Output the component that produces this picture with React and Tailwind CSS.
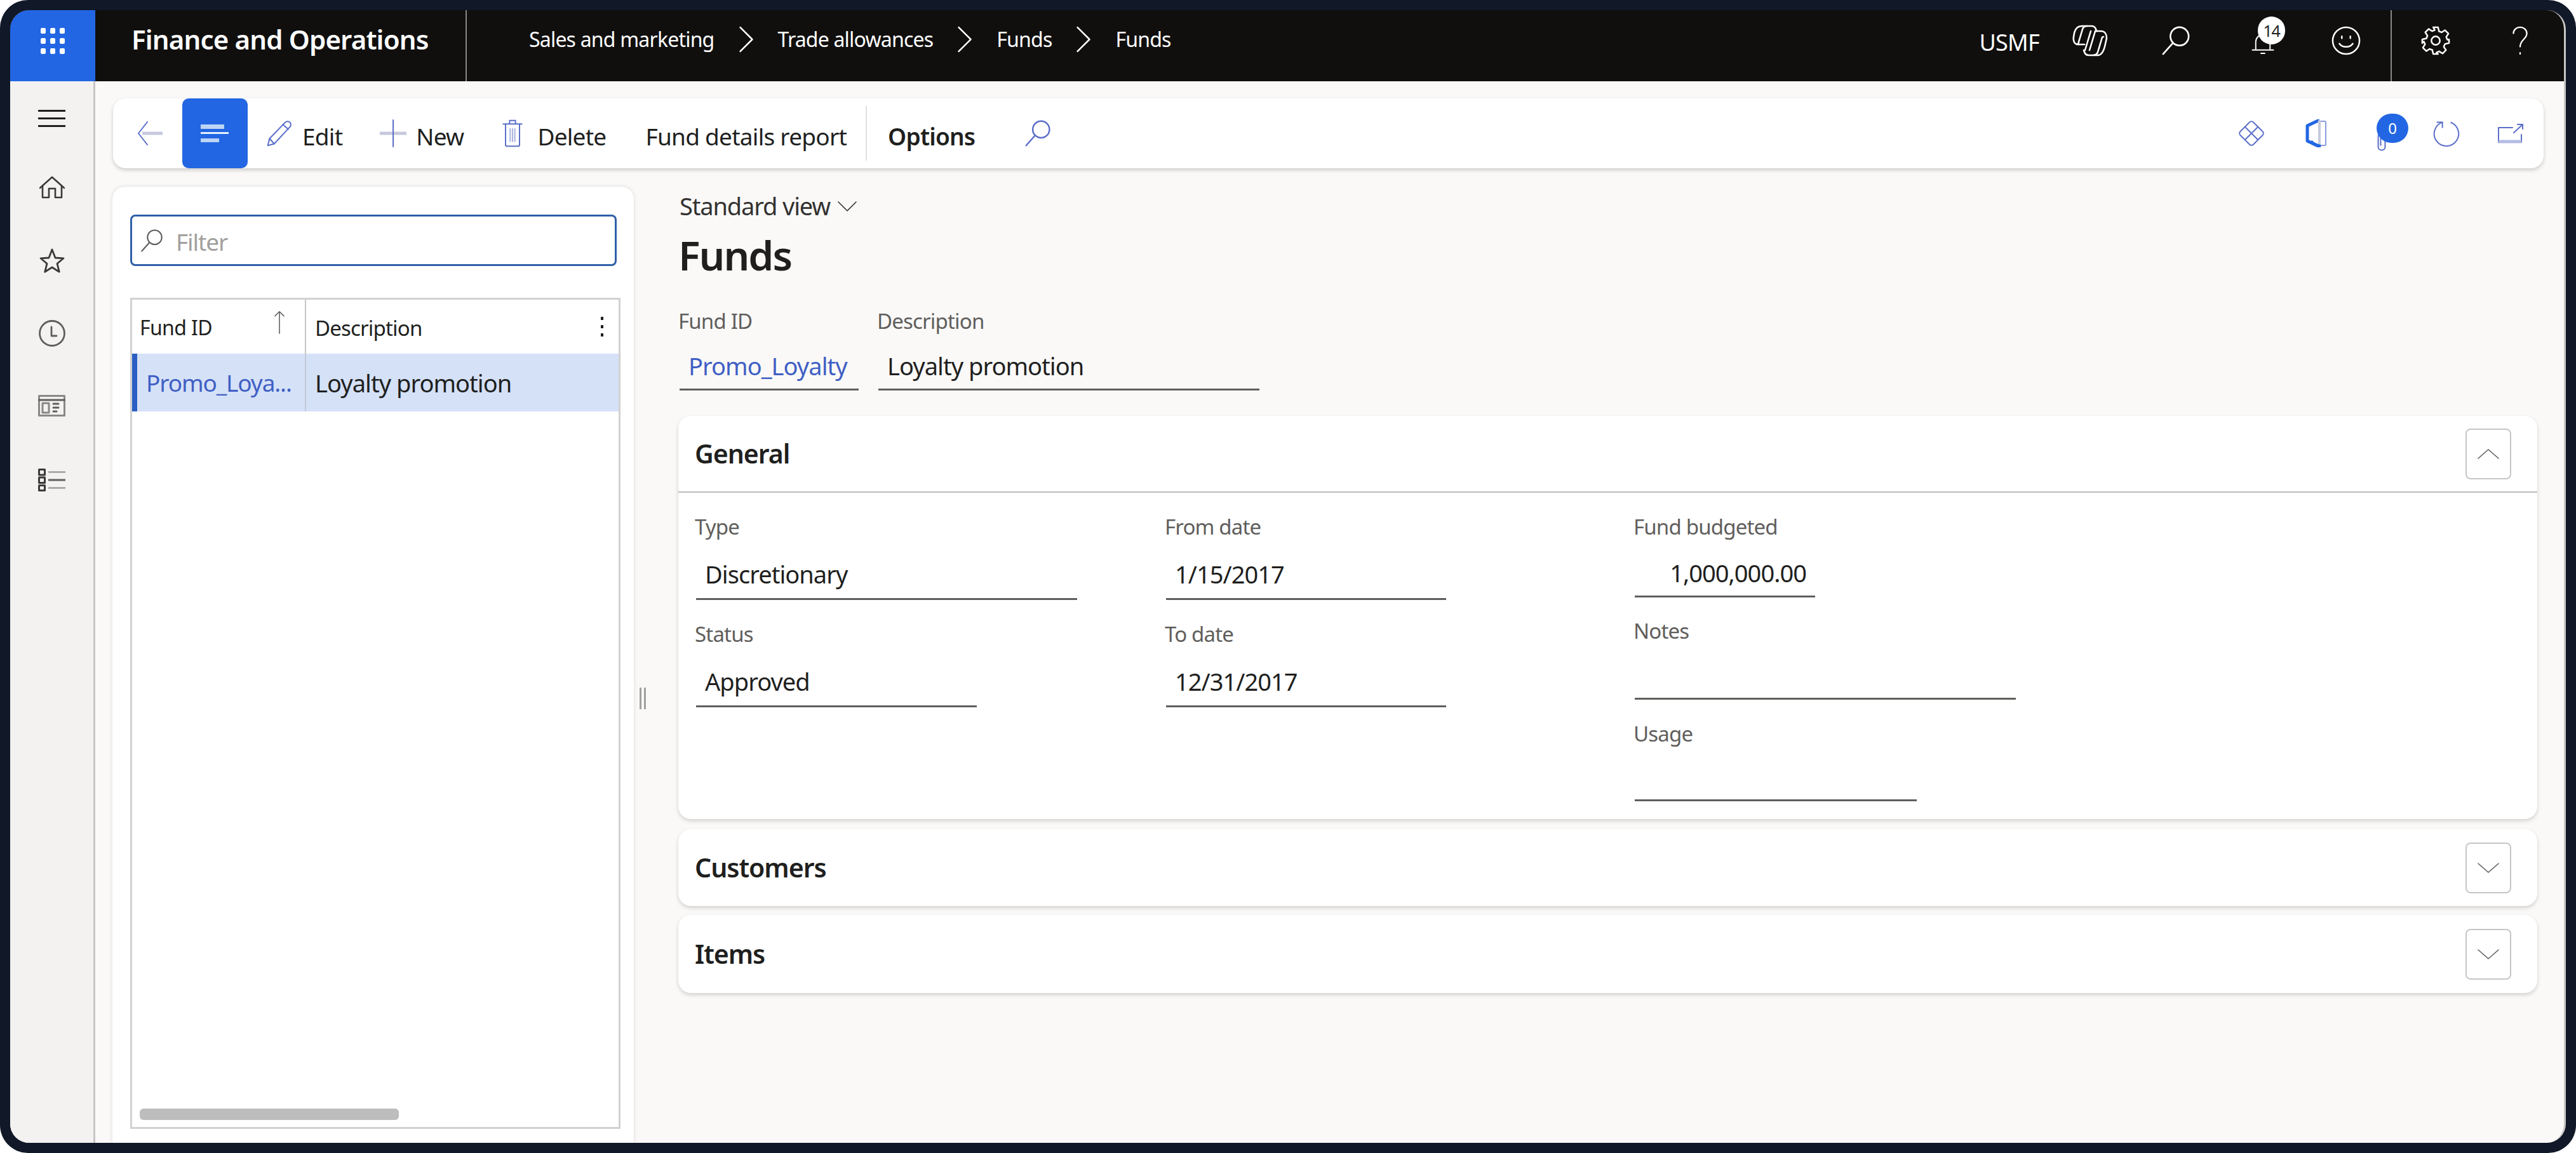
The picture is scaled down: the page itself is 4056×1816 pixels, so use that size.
import React from "react";

const Ico = ({ className = "", vb = "0 0 24 24", sw = 1.1, children }) => (
  <svg viewBox={vb} className={className} fill="none" stroke="currentColor" strokeWidth={sw} strokeLinecap="round" strokeLinejoin="round">
    {children}
  </svg>
);

const Search = ({ className }) => (
  <Ico className={className} sw={1.400}>
    <circle cx="15" cy="8.500" r="7.500" />
    <path d="M9.500 14L1.500 23" />
  </Ico>
);

const Chevron = () => (
  <Ico className="w-[26px] h-[42px] text-white mx-[37px]" vb="0 0 12 20" sw={1.200}>
    <path d="M1.500 1l9 9-9 9" />
  </Ico>
);

const Crumb = ({ children }) => (
  <span className="text-[32px] text-white leading-none tracking-[-0.025em]">{children}</span>
);

const TopBar = () => (
  <div className="h-[112px] bg-[#100f0e] flex items-center shrink-0">
    <div className="w-[134px] h-full bg-[#2266e3] flex items-center justify-center">
      <div className="grid grid-cols-3 gap-x-[7px] gap-y-[7px] mb-[16px]">
        {[0, 1, 2, 3, 4, 5, 6, 7, 8].map((i) => (
          <div key={i} className="w-[8px] h-[9px] rounded-[2px] bg-white" />
        ))}
      </div>
    </div>
    <div className="w-[585px] h-full border-r-2 border-[#8a8886] flex items-center pl-[57px]">
      <span className="text-[42px] font-semibold text-white tracking-[-0.02em] leading-none mb-[20px]">Finance and Operations</span>
    </div>
    <nav className="flex items-center ml-[98px] mb-[20px]">
      <Crumb>Sales and marketing</Crumb>
      <Chevron />
      <Crumb>Trade allowances</Crumb>
      <Chevron />
      <Crumb>Funds</Crumb>
      <Chevron />
      <Crumb>Funds</Crumb>
    </nav>
    <div className="ml-auto flex items-center h-full text-white">
      <span className="text-[36px] leading-none tracking-[-0.02em] mr-[52px] mb-[10px]">USMF</span>
      <Ico className="w-[56px] h-[52px] mr-[84px] mb-[16px]" vb="0 0 56 52" sw={2.600}>
        <path d="M16 3h14c4 0 6 2 7 5l1 3" />
        <path d="M23 3c-4 0-6 2-7 5L10 28c-1 3 0 4-3 4" />
        <path d="M16 3C8 3 5 7 3 14l-1 6c-1 6 1 12 7 12h10" />
        <path d="M40 49H26c-4 0-6-2-7-5l-1-3" />
        <path d="M33 49c4 0 6-2 7-5l6-20c1-3 0-4 3-4" />
        <path d="M36 11h9c6 0 9 5 9 11l-2 9c-2 10-5 18-12 18" />
        <path d="M29 11l-9 30M36 11l-9 30" />
      </Ico>
      <Search className="w-[46px] h-[46px] mr-[96px] mb-[16px]" />
      <div className="relative w-[46px] h-[46px] mr-[80px] mb-[16px]">
        <Ico className="w-[36px] h-[40px] absolute left-[0px] top-[8px]" sw={1.300}>
          <path d="M4.500 18V10a7.500 7.500 0 0 1 15 0v8" />
          <path d="M1 18.500h22M10 22h4" />
        </Ico>
        <div className="absolute left-[10px] top-[-15px] w-[43px] h-[44px] rounded-full bg-white flex items-center justify-center text-[#201f1e] text-[25px] leading-none tracking-[-0.05em]">
          14
        </div>
      </div>
      <Ico className="w-[46px] h-[46px] mr-[47px] mb-[16px]" sw={1.300}>
        <circle cx="12" cy="12" r="11" />
        <path d="M8.500 8.500v1.500M15.500 8.500v1.500M6.500 14.500c2.500 3.500 8.500 3.500 11 0" />
      </Ico>
      <div className="w-[2px] h-full bg-[#8a8886] mr-[45px]" />
      <Ico className="w-[48px] h-[46px] mr-[95px] mb-[16px]" sw={1.300}>
        <circle cx="12" cy="12" r="3.500" />
        <path d="M10 1h4l.7 3.300 2.200.9 2.800-1.800 2.800 2.800-1.800 2.800.9 2.200L23 11v3l-3.400.8-.9 2.200 1.800 2.800-2.800 2.800-2.800-1.800-2.200.9L14 23h-4l-.7-3.300-2.200-.9-2.800 1.800-2.800-2.800 1.800-2.800-.9-2.200L1 14v-3l3.400-.8.9-2.200-1.800-2.800 2.800-2.800 2.800 1.800 2.200-.9z" />
      </Ico>
      <Ico className="w-[28px] h-[46px] mr-[55px] mb-[16px]" vb="0 0 14 24" sw={1.200}>
        <path d="M1.500 6c0-3 2.500-5 5.500-5s5.500 2 5.500 5c0 5-5.500 5-5.500 11M7 22v1" />
      </Ico>
    </div>
  </div>
);

const ToolText = ({ children, className = "" }) => (
  <span className={`text-[37px] leading-none text-[#201f1e] tracking-[-0.02em] mt-[8px] ${className}`}>{children}</span>
);

const Toolbar = () => (
  <div className="mt-[27px] ml-[28px] mr-[32px] h-[110px] bg-white rounded-[20px] shadow-[0_3px_6px_rgba(0,0,0,0.18)] flex items-center shrink-0">
    <Ico className="w-[42px] h-[38px] ml-[38px] text-[#5b6fc9]" vb="0 0 42 38" sw={2}>
      <path d="M8 19h32" stroke="#c6c9dc" strokeWidth={5} strokeLinecap="butt" />
      <path d="M16 1L2 19l14 18" />
    </Ico>
    <div className="w-[103px] h-full bg-[#2266e3] rounded-[10px] ml-[29px] flex flex-col justify-center pl-[29px]">
      <div className="w-[37px] h-[7px] bg-[#bcd4f7]" />
      <div className="w-[44px] h-[3px] bg-[#e6f0ff] mt-[5px]" />
      <div className="w-[29px] h-[6px] bg-[#bcd4f7] mt-[7px]" />
    </div>
    <Ico className="w-[44px] h-[44px] ml-[28px] text-[#5b6fc9]" sw={1.100}>
      <path d="M2 22.500l1.500-6L17 2.500c1-1 3-1 4 0s1 3 0 4L7.500 21z" />
      <path d="M3.500 16.500l4 4.500M15 4.500l4.500 4" />
    </Ico>
    <ToolText className="ml-[14px]">Edit</ToolText>
    <Ico className="w-[44px] h-[44px] ml-[58px] text-[#5b6fc9]" vb="0 0 44 44" sw={2}>
      <path d="M1 22h42" stroke="#c6c9dc" strokeWidth={5} strokeLinecap="butt" />
      <path d="M22 1v42" />
    </Ico>
    <ToolText className="ml-[14px]">New</ToolText>
    <Ico className="w-[34px] h-[44px] ml-[60px] text-[#5b6fc9]" vb="0 0 18 24" sw={1.100}>
      <path d="M1 4h16M3 4v18c0 .5.500 1 1 1h10c.5 0 1-.5 1-1V4M6.500 4V1h5v3" />
      <path d="M7 8v11M11 8v11M9 8v11" stroke="#aab3e0" />
    </Ico>
    <ToolText className="ml-[22px]">Delete</ToolText>
    <ToolText className="ml-[62px]">Fund details report</ToolText>
    <div className="w-[2px] h-[86px] bg-[#e1dfdd] ml-[30px]" />
    <ToolText className="ml-[33px] font-semibold">Options</ToolText>
    <Search className="w-[42px] h-[42px] ml-[78px] text-[#5b6fc9]" />
    <div className="ml-auto flex items-center text-[#5b6fc9]">
      <Ico className="w-[42px] h-[42px] mr-[64px]" vb="0 0 42 42" sw={2}>
        <path d="M18 3.500c1.700-1.700 4.300-1.700 6 0L38.500 18c1.700 1.700 1.700 4.300 0 6L24 38.500c-1.700 1.700-4.300 1.700-6 0L3.500 24c-1.700-1.700-1.700-4.300 0-6z" />
        <path d="M11 11l20 20M31 11L11 31" />
      </Ico>
      <Ico className="w-[34px] h-[44px] mr-[78px]" vb="0 0 34 44" sw={2}>
        <path d="M20 2L3 10v24l17 8" stroke="#2266e3" strokeWidth={5} />
        <path d="M20 3h10c1 0 2 1 2 2v34c0 1-1 2-2 2H20" stroke="#8d9be0" />
        <path d="M22 3v38" stroke="#c6c9dc" strokeWidth={4} />
        <path d="M10 36c3 3 8 5 12 6" stroke="#2266e3" strokeWidth={5} />
      </Ico>
      <div className="relative w-[16px] h-[34px] mr-[72px] mt-[22px]">
        <Ico className="w-[16px] h-[34px]" vb="0 0 10 22" sw={1.300}>
          <path d="M1.500 6v12c0 4 7 4 7 0V4C8.500 0 4 0 4 4v12" />
        </Ico>
        <div className="absolute left-[0px] top-[-25px] w-[50px] h-[46px] rounded-full bg-[#2266e3] flex items-center justify-center text-white text-[24px] leading-none">
          0
        </div>
      </div>
      <Ico className="w-[44px] h-[44px] mr-[58px]" sw={1.100}>
        <path d="M8.500 2.500a10.500 10.500 0 1 0 7.500.2" />
        <path d="M8.500 7V2.500H4" />
      </Ico>
      <Ico className="w-[42px] h-[32px] mr-[31px]" vb="0 0 42 32" sw={2}>
        <path d="M2 7h22M2 7v23M38 18v12" />
        <path d="M2 29h36" stroke="#b4bbe4" strokeWidth={5} strokeLinecap="butt" />
        <path d="M26 15L40 2M32 2h8v7" />
      </Ico>
    </div>
  </div>
);

const Sidebar = () => (
  <div className="w-[134px] shrink-0 bg-[#f3f2f1] border-r-[3px] border-[#c8c6c4] flex flex-col items-center text-[#3b3a39]">
    <div className="mt-[45px] flex flex-col gap-[9px]">
      <div className="w-[43px] h-[3px] bg-[#201f1e]" />
      <div className="w-[43px] h-[3px] bg-[#201f1e]" />
      <div className="w-[43px] h-[3px] bg-[#201f1e]" />
    </div>
    <Ico className="w-[40px] h-[36px] mt-[77px]" vb="0 0 40 36" sw={2.600}>
      <path d="M1 19L20 2l19 17" />
      <path d="M5 16v18h10V20h10v14h10V16" />
    </Ico>
    <Ico className="w-[40px] h-[40px] mt-[78px]" vb="0 0 40 40" sw={2.800}>
      <path d="M20 2l5 13 13 .8-10 8.400 3.300 13-11.300-7.200-11.300 7.200 3.300-13-10-8.400L15 15z" />
    </Ico>
    <Ico className="w-[42px] h-[42px] mt-[73px] text-[#605e5c]" vb="0 0 42 42" sw={2.800}>
      <circle cx="21" cy="21" r="19.500" />
      <path d="M20 11v14h8" />
    </Ico>
    <Ico className="w-[43px] h-[34px] mt-[76px] text-[#8a8886]" vb="0 0 43 34" sw={3}>
      <rect x="1.500" y="1.500" width="40" height="31" />
      <path d="M1.500 8h40" stroke="#605e5c" />
      <rect x="7" y="13" width="10" height="15" />
      <path d="M24 14h8M24 20h8M24 26h5" stroke="#605e5c" />
    </Ico>
    <Ico className="w-[43px] h-[36px] mt-[82px]" vb="0 0 43 36" sw={3}>
      <rect x="1.500" y="1.500" width="9" height="8.500" />
      <rect x="1.500" y="14" width="9" height="8.500" />
      <rect x="1.500" y="26.500" width="9" height="8" />
      <path d="M16 5.500h27M16 30.500h27" stroke="#a19f9d" strokeWidth={2.500} strokeLinecap="butt" />
      <path d="M16 18h27" stroke="#605e5c" strokeWidth={3} strokeLinecap="butt" />
    </Ico>
  </div>
);

const LeftPane = () => (
  <div className="w-[821px] shrink-0 bg-white rounded-t-[20px] shadow-[0_0_6px_rgba(0,0,0,0.13)] pt-[44px] pl-[28px]">
    <div className="w-[766px] h-[81px] border-[3px] border-[#2f5fa8] rounded-[8px] flex items-center pl-[13px]">
      <Search className="w-[36px] h-[36px] text-[#605e5c]" />
      <span className="ml-[20px] mt-[4px] text-[37px] leading-none text-[#a19f9d] tracking-[-0.03em]">Filter</span>
    </div>
    <div className="relative w-[772px] h-[1309px] mt-[50px] border-[3px] border-[#d1d1d1]">
      <div className="flex h-[85px] items-center">
        <div className="w-[274px] h-full border-r-2 border-[#c8c6c4] flex items-center pl-[12px]">
          <span className="text-[32px] leading-none text-[#201f1e] tracking-[-0.02em] mt-[3px]">Fund ID</span>
          <Ico className="w-[18px] h-[38px] ml-[97px] mb-[14px] text-[#605e5c]" vb="0 0 10 22" sw={0.900}>
            <path d="M5 21V1M1 5l4-4 4 4" />
          </Ico>
        </div>
        <span className="ml-[14px] mt-[3px] text-[33px] leading-none text-[#201f1e] tracking-[-0.025em]">Description</span>
        <div className="ml-auto mr-[24px] flex flex-col gap-[8px]">
          <div className="w-[4px] h-[5px] bg-[#201f1e]" />
          <div className="w-[4px] h-[5px] bg-[#201f1e]" />
          <div className="w-[4px] h-[5px] bg-[#201f1e]" />
        </div>
      </div>
      <div className="flex h-[91px] bg-[#d5e1f7] border-l-[8px] border-[#2b5fc4] items-center">
        <div className="w-[266px] h-full border-r-2 border-[#c3cbdb] flex items-center pl-[14px]">
          <span className="text-[37px] leading-none text-[#3f5fc4] tracking-[-0.03em]">Promo_Loya...</span>
        </div>
        <span className="ml-[14px] text-[38px] leading-none text-[#201f1e] tracking-[-0.025em]">Loyalty promotion</span>
      </div>
      <div className="absolute left-[12px] bottom-[11px] w-[408px] h-[18px] rounded-[6px] bg-[#bdbdbd]" />
    </div>
  </div>
);

const Field = ({ label, value, w, pt = "pt-[33px]", gap = "mt-[25px]", h = "h-[71px]", right = false, blue = false }) => (
  <div className={`${pt} ${w}`}>
    <div className="-ml-[2px] h-[40px] flex items-center text-[33px] leading-none text-[#605e5c] tracking-[-0.025em]">{label}</div>
    <div className={`${gap} ${h} border-b-[3px] border-[#605e5c] flex items-center pb-[8px] ${right ? "justify-end pr-[14px]" : "pl-[14px]"}`}>
      <span className={`text-[38px] leading-none tracking-[-0.025em] ${blue ? "text-[#3f5fc4]" : "text-[#201f1e]"}`}>{value}</span>
    </div>
  </div>
);

const CardBtn = ({ up }) => (
  <div className="w-[72px] h-[80px] mr-[41px] border-[2px] border-[#c8c6c4] rounded-[8px] flex items-center justify-center text-[#605e5c]">
    <Ico className="w-[34px] h-[18px]" vb="0 0 34 18" sw={1.600}>
      <path d={up ? "M1 16L17 2l16 14" : "M1 2l16 14L33 2"} />
    </Ico>
  </div>
);

const CardHead = ({ title, up, h = "h-[121px]", line = false }) => (
  <div className={`${h} flex items-center justify-between ${line ? "border-b-2 border-[#bdbbb9]" : ""}`}>
    <span className="ml-[26px] text-[41px] font-semibold leading-none text-[#201f1e] tracking-[-0.025em]">{title}</span>
    <CardBtn up={up} />
  </div>
);

const cardClass = "bg-white rounded-[20px] shadow-[0_3px_6px_rgba(0,0,0,0.16)]";

const MainPane = () => (
  <div className="w-[2927px] shrink-0">
    <div className="pl-[2px] mt-[10px] h-[40px] flex items-center">
      <span className="text-[38px] leading-none text-[#323130] tracking-[-0.03em]">Standard view</span>
      <Ico className="w-[30px] h-[20px] ml-[12px] mt-[2px] text-[#323130]" vb="0 0 30 20" sw={1.600}>
        <path d="M1 3l14 14L29 3" />
      </Ico>
    </div>
    <div className="mt-[18px] h-[80px] flex items-center text-[64px] font-semibold leading-none text-[#201f1e] tracking-[-0.03em]">
      Funds
    </div>
    <div className="flex pt-[7px] pl-[2px]">
      <Field label="Fund ID" value="Promo_Loyalty" w="w-[282px]" pt="pt-[36px]" gap="mt-[22px]" h="h-[68px]" blue />
      <div className="w-[31px]" />
      <Field label="Description" value="Loyalty promotion" w="w-[600px]" pt="pt-[36px]" gap="mt-[22px]" h="h-[68px]" />
    </div>
    <div className={`${cardClass} mt-[40px] h-[635px]`}>
      <CardHead title="General" up line />
      <div className="flex pl-[28px]">
        <div className="w-[740px]">
          <Field label="Type" value="Discretionary" w="w-[600px]" />
          <Field label="Status" value="Approved" w="w-[442px]" />
        </div>
        <div className="w-[738px]">
          <Field label="From date" value="1/15/2017" w="w-[441px]" />
          <Field label="To date" value="12/31/2017" w="w-[441px]" />
        </div>
        <div>
          <Field label="Fund budgeted" value="1,000,000.00" w="w-[284px]" h="h-[67px]" right />
          <Field label="Notes" value="" w="w-[600px]" pt="pt-[32px]" h="h-[64px]" />
          <Field label="Usage" value="" w="w-[444px]" pt="pt-[33px]" h="h-[62px]" />
        </div>
      </div>
    </div>
    <div className={`${cardClass} mt-[16px]`}>
      <CardHead title="Customers" />
    </div>
    <div className={`${cardClass} mt-[14px]`}>
      <CardHead title="Items" h="h-[123px]" />
    </div>
  </div>
);

const Splitter = () => (
  <div className="w-[70px] shrink-0 pl-[9px] pt-[789px]">
    <div className="flex gap-[4px]">
      <div className="w-[3px] h-[34px] bg-[#a0a0a0]" />
      <div className="w-[3px] h-[34px] bg-[#a0a0a0]" />
    </div>
  </div>
);

export default function App() {
  return (
    <div className="w-[4056px] h-[1816px] bg-white [font-family:'Noto_Sans',sans-serif]">
      <div className="w-full h-full bg-[#111827] rounded-[44px] p-[16px]">
        <div className="w-full h-full rounded-[30px] overflow-hidden flex flex-col bg-[#faf9f8] border-r-[3px] border-[#c8c6c4]">
          <TopBar />
          <div className="flex flex-1 min-h-0">
            <Sidebar />
            <div className="flex-1 flex flex-col min-w-0">
              <Toolbar />
              <div className="flex flex-1 min-h-0 pt-[29px] pl-[27px]">
                <LeftPane />
                <Splitter />
                <MainPane />
              </div>
            </div>
          </div>
        </div>
      </div>
    </div>
  );
}
